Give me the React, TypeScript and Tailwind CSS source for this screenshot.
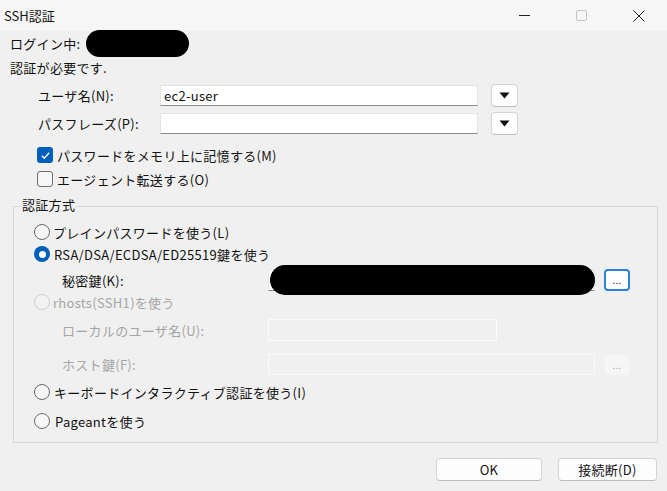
import React from 'react';

const font = { fontFamily: '"Noto Sans CJK JP", "Noto Sans", sans-serif' };

const Check: React.FC<{ checked?: boolean }> = ({ checked }) =>
  checked ? (
    <span className="w-[16px] h-[16px] rounded-[3px] bg-[#005fb8] flex items-center justify-center shrink-0">
      <svg width="11" height="11" viewBox="0 0 11 11">
        <path d="M1.8 5.8 L4.3 8.2 L9.2 2.8" fill="none" stroke="#fff" strokeWidth="1.3" />
      </svg>
    </span>
  ) : (
    <span className="w-[16px] h-[16px] rounded-[3px] border border-[#6e6e6e] bg-[#f6f6f6] shrink-0" />
  );

const Radio: React.FC<{ checked?: boolean; disabled?: boolean }> = ({ checked, disabled }) => {
  if (checked)
    return (
      <span className="w-[16px] h-[16px] rounded-full bg-[#005fb8] flex items-center justify-center shrink-0">
        <span className="w-[7px] h-[7px] rounded-full bg-white" />
      </span>
    );
  return (
    <span
      className={
        'w-[16px] h-[16px] rounded-full border shrink-0 ' +
        (disabled ? 'border-[#cfcfcf] bg-[#f3f3f3]' : 'border-[#6a6a6a] bg-[#f6f6f6]')
      }
    />
  );
};

const DropBtn = () => (
  <button className="w-[27px] h-[23px] rounded-[4px] border border-[#d4d4d4] border-b-[#bdbdbd] bg-[#fdfdfd] flex items-center justify-center">
    <svg width="11" height="7" viewBox="0 0 11 7">
      <path d="M0.5 0.5 H10.5 L5.5 6.5 Z" fill="#111" />
    </svg>
  </button>
);

const TextBox: React.FC<{ w: string; value?: string; disabled?: boolean; h?: string }> = ({ w, value, disabled, h }) => (
  <div
    className={
      `${w} ${h ?? 'h-[21px]'} flex items-center px-[3px] text-[13px] leading-none ` +
      (disabled
        ? 'bg-[#f0f0f0] border border-[#fafafa]'
        : 'bg-white border border-[#e3e3e3] border-b-[#8a8a8a]')
    }
  >
    {value}
  </div>
);

export default function App() {
  return (
    <div style={font} className="w-[667px] h-[491px] bg-[#f0f0f0] flex flex-col text-[13px] leading-none tracking-[0.3px] text-[#111] overflow-hidden">
      {/* title bar */}
      <div className="h-[31px] bg-[#f6f6f6] flex items-center">
        <span className="pl-[4px] text-[13px] tracking-normal flex-1">SSH認証</span>
        <div className="flex h-full">
          <div className="w-[57px] flex items-center justify-center">
            <span className="w-[11px] h-[1px] bg-[#222]" />
          </div>
          <div className="w-[57px] flex items-center justify-center">
            <span className="w-[11px] h-[11px] rounded-[2px] border border-[#c4c4c4]" />
          </div>
          <div className="w-[57px] flex items-center justify-center">
            <svg width="12" height="12" viewBox="0 0 12 12">
              <path d="M0.5 0.5 L11.5 11.5 M11.5 0.5 L0.5 11.5" stroke="#222" strokeWidth="1" />
            </svg>
          </div>
        </div>
      </div>

      {/* login */}
      <div className="h-[24px] flex items-center pl-[10px]">
        <span>ログイン中:</span>
        <span className="ml-[6px] w-[103px] h-[27px] rounded-full bg-black" />
      </div>
      <div className="h-[25px] flex items-center pl-[10px]">認証が必要です.</div>

      {/* user / passphrase */}
      <div className="mt-[4px] h-[22px] flex items-center pl-[38px]">
        <span className="w-[122px]">ユーザ名(N):</span>
        <TextBox w="w-[318px]" value="ec2-user" />
        <span className="ml-[13px]">
          <DropBtn />
        </span>
      </div>
      <div className="mt-[6px] h-[22px] flex items-center pl-[38px]">
        <span className="w-[122px]">パスフレーズ(P):</span>
        <TextBox w="w-[318px]" />
        <span className="ml-[13px]">
          <DropBtn />
        </span>
      </div>

      <label className="mt-[11px] h-[20px] flex items-center gap-[4px] pl-[37px]">
        <Check checked />
        <span>パスワードをメモリ上に記憶する(M)</span>
      </label>
      <label className="mt-[4px] h-[20px] flex items-center gap-[4px] pl-[37px]">
        <Check />
        <span>エージェント転送する(O)</span>
      </label>

      {/* group */}
      <div className="relative mt-[17px] ml-[13px] w-[645px] h-[237px] border border-[#d8d8d8] flex flex-col pt-[15px]">
        <span className="absolute -top-[9px] left-[7px] px-[1px] bg-[#f0f0f0]">認証方式</span>

        <label className="h-[20px] flex items-center gap-[3px] pl-[20px]">
          <Radio />
          <span>プレインパスワードを使う(L)</span>
        </label>
        <label className="mt-[2px] h-[20px] flex items-center gap-[4px] pl-[20px]">
          <Radio checked />
          <span>RSA/DSA/ECDSA/ED25519鍵を使う</span>
        </label>

        <div className="mt-[4px] h-[24px] flex items-center pl-[48px]">
          <span className="w-[206px]">秘密鍵(K):</span>
          <div className="relative">
            <TextBox w="w-[327px]" h="h-[22px]" />
            <span className="absolute left-[2px] -top-[4px] w-[325px] h-[30px] rounded-full bg-black" />
          </div>
          <button className="ml-[9px] w-[26px] h-[22px] rounded-[4px] border-2 border-[#2a83d8] bg-white text-[10px] flex items-end justify-center pb-[4px]">
            ...
          </button>
        </div>

        <label className="h-[20px] flex items-center gap-[3px] pl-[20px] text-[#a5a5a5]">
          <Radio disabled />
          <span>rhosts(SSH1)を使う</span>
        </label>

        <div className="mt-[7px] h-[22px] flex items-center pl-[48px] text-[#a5a5a5]">
          <span className="w-[206px]">ローカルのユーザ名(U):</span>
          <TextBox w="w-[229px]" h="h-[22px]" disabled />
        </div>

        <div className="mt-[12px] h-[22px] flex items-center pl-[48px] text-[#a5a5a5]">
          <span className="w-[206px]">ホスト鍵(F):</span>
          <TextBox w="w-[327px]" h="h-[21px]" disabled />
          <button className="ml-[9px] w-[26px] h-[21px] rounded-[4px] border border-[#f3f3f3] bg-[#f6f6f6] text-[10px] text-[#a0a0a0] flex items-end justify-center pb-[4px]">
            ...
          </button>
        </div>

        <label className="mt-[7px] h-[20px] flex items-center gap-[4px] pl-[20px]">
          <Radio />
          <span>キーボードインタラクティブ認証を使う(I)</span>
        </label>
        <label className="mt-[9px] h-[20px] flex items-center gap-[5px] pl-[20px]">
          <Radio />
          <span>Pageantを使う</span>
        </label>
      </div>

      {/* buttons */}
      <div className="mt-[15px] flex justify-end gap-[16px] pr-[10px]">
        <button className="w-[106px] h-[23px] rounded-[4px] border border-[#d4d4d4] border-b-[#bcbcbc] bg-[#fdfdfd] text-[13px]">
          OK
        </button>
        <button className="w-[99px] h-[23px] rounded-[4px] border border-[#d4d4d4] border-b-[#bcbcbc] bg-[#fdfdfd] text-[13px]">
          接続断(D)
        </button>
      </div>
    </div>
  );
}
